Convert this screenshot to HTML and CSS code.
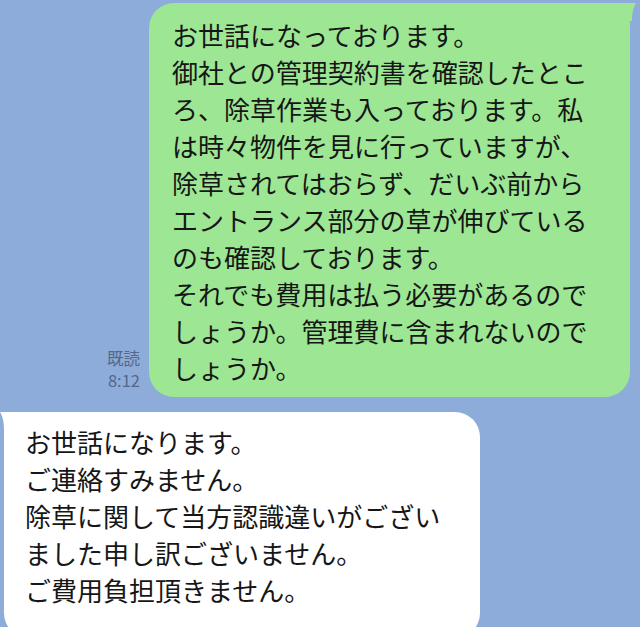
FILE: index.html
```html
<!DOCTYPE html>
<html lang="ja">
<head>
<meta charset="utf-8">
<link rel="stylesheet" href="styles.css">
</head>
<body>
<div class="chat">
  <div class="row row-out">
    <div class="meta">既読<br>8:12</div>
    <div class="bubble bubble-out">
      <svg class="tail tail-out" viewBox="0 0 10 18" width="10" height="18"><path d="M0 0 L10 0 C8 3 6 8 6 18 L0 18 Z"/></svg>
      お世話になっております。<br>御社との管理契約書を確認したとこ<br>ろ、除草作業も入っております。私<br>は時々物件を見に行っていますが、<br>除草されてはおらず、だいぶ前から<br>エントランス部分の草が伸びている<br>のも確認しております。<br>それでも費用は払う必要があるので<br>しょうか。管理費に含まれないので<br>しょうか。
    </div>
  </div>
  <div class="row row-in">
    <div class="bubble bubble-in">
      <svg class="tail tail-in" viewBox="0 0 10 18" width="10" height="18"><path d="M0 0 L10 0 L10 18 L4 18 C4 8 2 3 0 0 Z"/></svg>
      お世話になります。<br>ご連絡すみません。<br>除草に関して当方認識違いがござい<br>ました申し訳ございません。<br>ご費用負担頂きません。
    </div>
  </div>
</div>
</body>
</html>
```

FILE: styles.css
```css
html, body {
  margin: 0;
  padding: 0;
  background: #8eacd9;
  height: 100%;
  overflow: hidden;
}
.chat {
  display: flex;
  flex-direction: column;
  font-family: "Noto Sans CJK JP", "Noto Sans", sans-serif;
  color: #161616;
}
.row {
  display: flex;
}
.row-out {
  justify-content: flex-end;
  align-items: flex-end;
  margin-top: 3px;
  padding-right: 10px;
}
.row-in {
  margin-top: 15px;
  padding-left: 4px;
}
.meta {
  font-size: 16.5px;
  line-height: 22px;
  color: #56678a;
  text-align: right;
  margin-right: 9px;
  margin-bottom: 6px;
}
.bubble {
  position: relative;
  font-size: 26px;
  line-height: 37px;
  white-space: nowrap;
  box-sizing: border-box;
  border-radius: 25px;
}
.bubble-out {
  width: 481px;
  background: #9de694;
  padding: 13px 20px 11px 23px;
  border-top-right-radius: 0;
}
.bubble-in {
  width: 476px;
  background: #ffffff;
  padding: 11px 20px 30px 21px;
  border-top-left-radius: 0;
}
.tail {
  position: absolute;
  top: 0;
}
.tail-out {
  right: -6px;
  fill: #9de694;
}
.tail-in {
  left: -4px;
  fill: #ffffff;
}
```
